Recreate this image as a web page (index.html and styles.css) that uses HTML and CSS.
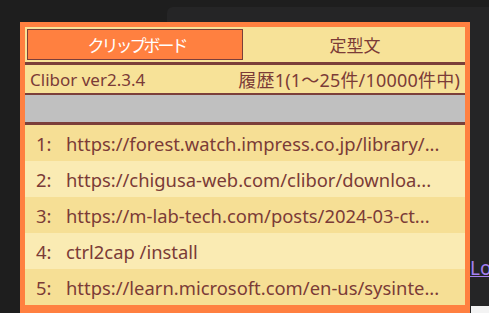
FILE: index.html
```html
<!DOCTYPE html>
<html lang="ja">
<head>
<meta charset="utf-8">
<title>Clibor</title>
<link rel="stylesheet" href="styles.css">
</head>
<body>
<div class="desk-panel"></div>
<a class="desk-link" href="#">Lo</a>
<div class="desk-white"></div>
<div class="window">
  <div class="panel">
    <div class="tabs">
      <div class="tab active"><span class="tab-label">クリップボード</span></div>
      <div class="tab">定型文</div>
    </div>
    <div class="sep thick"></div>
    <div class="info">
      <span>Clibor ver2.3.4</span>
      <span class="count">履歴1(1～25件/10000件中)</span>
    </div>
    <div class="sep"></div>
    <div class="search"></div>
    <div class="sep thick"></div>
    <ul class="list">
      <li class="row odd"><span class="num">1:</span><span class="txt">https://forest.watch.impress.co.jp/library/...</span></li>
      <li class="row even"><span class="num">2:</span><span class="txt">https://chigusa-web.com/clibor/downloa...</span></li>
      <li class="row odd"><span class="num">3:</span><span class="txt">https://m-lab-tech.com/posts/2024-03-ct...</span></li>
      <li class="row even"><span class="num">4:</span><span class="txt">ctrl2cap /install</span></li>
      <li class="row odd"><span class="num">5:</span><span class="txt">https://learn.microsoft.com/en-us/sysinte...</span></li>
    </ul>
  </div>
</div>
</body>
</html>
```

FILE: styles.css
```css
html, body {
  margin: 0;
  padding: 0;
}
body {
  width: 489px;
  height: 313px;
  overflow: hidden;
  position: relative;
  background: #1e1e1e;
  font-family: "Noto Sans", "Noto Sans CJK JP", sans-serif;
}
.desk-panel {
  position: absolute;
  left: 167px;
  top: 7px;
  right: 0;
  bottom: 0;
  background: #252526;
  border-top-left-radius: 6px;
}
.desk-link {
  position: absolute;
  left: 470px;
  top: 255px;
  color: #a680f0;
  font-size: 19px;
  text-decoration: underline;
}
.desk-white {
  position: absolute;
  left: 471px;
  top: 306px;
  right: 0;
  bottom: 0;
  background: #f3f3f3;
}
.window {
  position: absolute;
  left: 20px;
  top: 22px;
  width: 440px;
  padding: 5px 5px 10px;
  background: #ff8040;
}
.panel {
  background: #f7e298;
  color: #7b3b37;
  display: flex;
  flex-direction: column;
}
.tabs {
  display: grid;
  grid-template-columns: 220px 220px;
  height: 35px;
}
.tab {
  display: flex;
  align-items: center;
  justify-content: center;
  font-size: 17px;
}
.tab.active {
  margin: 2px;
  background: #ff8040;
  border: 1px solid #7b3f3a;
  color: #fff;
}
.tab-label {
  letter-spacing: -3px;
  padding-left: 3px;
}
.sep {
  height: 2px;
  background: #7b3f3a;
}
.sep.thick {
  height: 3px;
}
.info {
  height: 28px;
  display: flex;
  align-items: center;
  justify-content: space-between;
  padding: 0 5px;
  font-size: 17px;
}
.count {
  font-size: 18px;
  letter-spacing: 0.2px;
}
.search {
  height: 27px;
  background: #c0c0c0;
}
.list {
  list-style: none;
  margin: 0;
  padding: 0;
}
.row {
  height: 36px;
  display: flex;
  align-items: center;
  font-size: 18.4px;
  white-space: nowrap;
}
.row.odd {
  background: #f6df95;
}
.row.even {
  background: #faebb3;
}
.num {
  width: 30px;
  padding-left: 11px;
  flex: none;
}
.txt {
  overflow: hidden;
}
```
